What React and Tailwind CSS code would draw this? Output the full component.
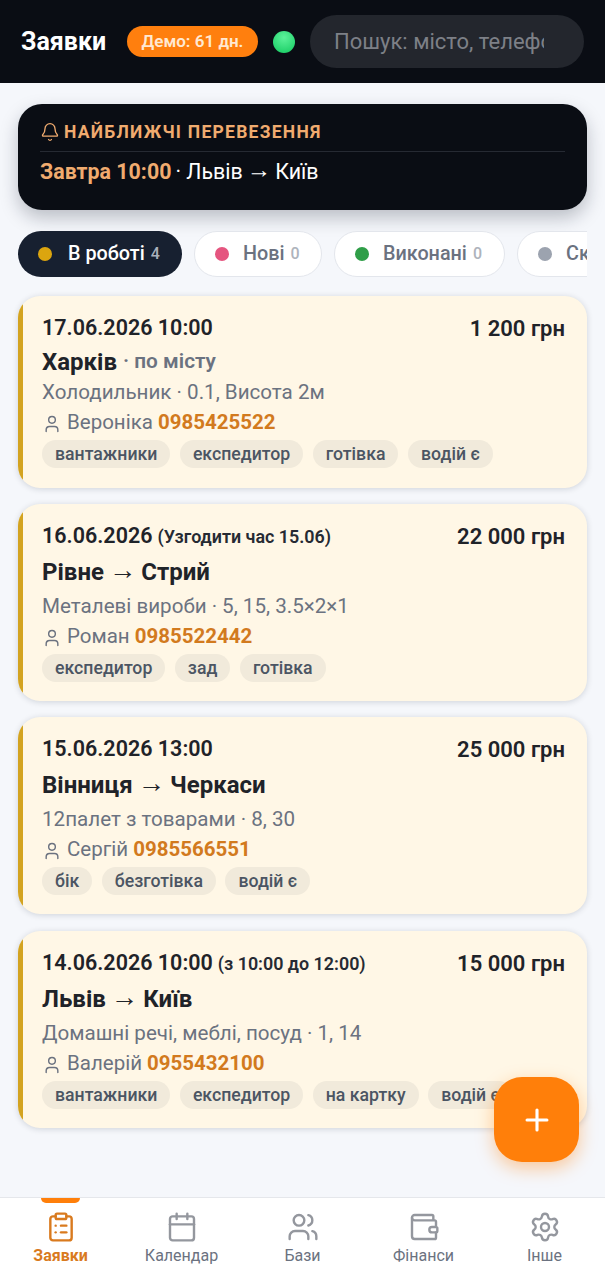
import React from "react";
import { Bell, User, ClipboardList, Calendar, Users, Wallet, Settings, Plus } from "lucide-react";

const filters = [
  { label: "В роботі", count: 4, dot: "bg-[#dca50f]", active: true, width: "w-[164px]" },
  { label: "Нові", count: 0, dot: "bg-[#e5557f]", width: "w-[128px]" },
  { label: "Виконані", count: 0, dot: "bg-[#2f9e48]", width: "w-[171px]" },
  { label: "Скасовані", count: 0, dot: "bg-[#9ca3af]", width: "w-[170px]" },
];

const orders = [
  {
    date: "17.06.2026 10:00",
    price: "1 200 грн",
    from: "Харків",
    sub: "по місту",
    cargo: "Холодильник · 0.1, Висота 2м",
    name: "Вероніка",
    phone: "0985425522",
    tags: ["вантажники", "експедитор", "готівка", "водій є"],
  },
  {
    date: "16.06.2026",
    note: "(Узгодити час 15.06)",
    price: "22 000 грн",
    from: "Рівне",
    to: "Стрий",
    cargo: "Металеві вироби · 5, 15, 3.5×2×1",
    name: "Роман",
    phone: "0985522442",
    tags: ["експедитор", "зад", "готівка"],
  },
  {
    date: "15.06.2026 13:00",
    price: "25 000 грн",
    from: "Вінниця",
    to: "Черкаси",
    cargo: "12палет з товарами · 8, 30",
    name: "Сергій",
    phone: "0985566551",
    tags: ["бік", "безготівка", "водій є"],
  },
  {
    date: "14.06.2026 10:00",
    note: "(з 10:00 до 12:00)",
    price: "15 000 грн",
    from: "Львів",
    to: "Київ",
    cargo: "Домашні речі, меблі, посуд · 1, 14",
    name: "Валерій",
    phone: "0955432100",
    tags: ["вантажники", "експедитор", "на картку", "водій є"],
  },
];

const navItems = [
  { label: "Заявки", icon: ClipboardList, active: true },
  { label: "Календар", icon: Calendar },
  { label: "Бази", icon: Users },
  { label: "Фінанси", icon: Wallet },
  { label: "Інше", icon: Settings },
];

// Roboto's own arrow is too small, the wide one comes from Liberation Sans
const Arrow = () => (
  <span className="inline-block -translate-y-[0.08em] font-['Liberation_Sans',sans-serif] text-[1.14em] leading-none">→</span>
);

const OrderCard = ({ order }) => (
  <div className={`${order.sub ? "h-[192px]" : "h-[197px]"} flex shrink-0 overflow-hidden rounded-[22px] bg-[#fff7e6] shadow-[0_1px_6px_rgba(15,23,42,0.16)] last:mt-[1px]`}>
    <div className="w-[5px] shrink-0 bg-[#d3a320]" />
    <div className="min-w-0 flex-1 pl-[19px] pr-[22px] pt-[19px]">
      <div className="flex h-[26px] items-center justify-between text-[21.5px] font-semibold text-[#1f2329]">
        <div className="whitespace-nowrap">
          {order.date}
          {order.note && <span className="ml-[5px] text-[17.9px] font-semibold text-[#262a33]">{order.note}</span>}
        </div>
        <div className="whitespace-nowrap text-[22px]">{order.price}</div>
      </div>
      <div className={`${order.sub ? "h-[28px] gap-[6px]" : "h-[32px] gap-[5px]"} mt-[7px] flex items-center whitespace-nowrap text-[24px] font-bold text-[#1f2329]`}>
        <span>{order.from}</span>
        {order.to && <Arrow />}
        {order.to && <span>{order.to}</span>}
        {order.sub && <span className="text-[20.8px] font-semibold text-[#6b7280]">· {order.sub}</span>}
      </div>
      <div className={`${order.sub ? "mt-[2px]" : "mt-[4px]"} flex h-[28px] items-center whitespace-nowrap text-[20.6px] text-[#6b7280]`}>{order.cargo}</div>
      <div className="mt-[2px] flex h-[28px] items-center whitespace-nowrap text-[20.5px] text-[#6b7280]">
        <User size={20} strokeWidth={1.7} className="mr-[5px] mt-[3px]" />
        {order.name}
        <span className="ml-[5px] font-bold text-[#d27a1e]">{order.phone}</span>
      </div>
      <div className="mt-[4px] flex gap-[9.5px] whitespace-nowrap">
        {order.tags.map((tag) => (
          <span key={tag} className="flex h-[28px] items-center rounded-full bg-[#f1eadb] px-[13px] text-[17.7px] font-medium text-[#4b5563]">
            {tag}
          </span>
        ))}
      </div>
    </div>
  </div>
);

const App = () => {
  return (
    <div className="relative flex h-[1280px] w-[605px] flex-col overflow-hidden bg-[#f5f7fb] font-['Roboto',sans-serif]">
      {/* Header */}
      <header className="flex h-[83px] shrink-0 items-center bg-[#0a0d14] px-[21px]">
        <h1 className="w-[87px] shrink-0 whitespace-nowrap text-[25px] font-bold text-white">Заявки</h1>
        <span className="ml-[19px] flex h-[31px] w-[131px] shrink-0 items-center justify-center rounded-full bg-[#ff7f0e] text-[17px] font-semibold text-[#ffe9d2]">
          Демо: 61 дн.
        </span>
        <span className="ml-[15px] h-[22px] w-[22px] shrink-0 rounded-full bg-[radial-gradient(circle_at_50%_30%,#5cf29a,#12c95f)]" />
        <div className="ml-[15px] flex h-[53px] w-[274px] shrink-0 items-center rounded-full bg-[#23262d] pl-[24px] pr-[40px]">
          <input
            readOnly
            placeholder="Пошук: місто, телефон"
            className="w-full min-w-0 bg-transparent text-[22px] text-white outline-none placeholder:text-[#7d8087]"
          />
        </div>
      </header>

      <main className="flex min-h-0 flex-1 flex-col px-[18px] pt-[21px]">
        {/* Nearest transports */}
        <section className="h-[106px] shrink-0 rounded-[24px] bg-[#0a0d14] px-[22px] pt-[17px] shadow-[0_8px_18px_rgba(15,23,42,0.25)]">
          <div className="flex h-[22px] items-center gap-[4px] text-[#f0ab6f]">
            <Bell size={20} strokeWidth={1.6} />
            <span className="whitespace-nowrap text-[17.5px] font-bold tracking-[1.25px]">НАЙБЛИЖЧІ ПЕРЕВЕЗЕННЯ</span>
          </div>
          <div className="mt-[8px] flex items-center gap-[4px] whitespace-nowrap border-t border-[#262a33] pt-[6px] text-[21.4px] leading-[28px] text-white">
            <span className="font-bold text-[#f0ab6f]">Завтра 10:00</span>
            <span>· Львів</span>
            <Arrow />
            <span>Київ</span>
          </div>
        </section>

        {/* Status filters */}
        <div className="mt-[21px] flex h-[46px] shrink-0 gap-[12px] overflow-hidden">
          {filters.map((f) => (
            <div
              key={f.label}
              className={`${f.width} flex h-[46px] shrink-0 items-center rounded-full pl-[20px] text-[19.8px] font-medium ${
                f.active ? "bg-[#172030] text-white" : "border border-[#e3e6ec] bg-white text-[#6b7280]"
              }`}
            >
              <span className={`${f.dot} h-[14px] w-[14px] shrink-0 rounded-full`} />
              <span className={`${f.active ? "ml-[16px]" : "ml-[14px]"} whitespace-nowrap`}>{f.label}</span>
              <span className={`ml-[6px] text-[16px] font-medium ${f.active ? "text-[#aab0bb]" : "text-[#aeb3bc]"}`}>{f.count}</span>
            </div>
          ))}
        </div>

        {/* Order list */}
        <div className="mt-[19px] flex flex-col gap-[16px]">
          {orders.map((order) => (
            <OrderCard key={order.date} order={order} />
          ))}
        </div>
      </main>

      {/* Add button */}
      <button className="absolute left-[494px] top-[1077px] flex h-[85px] w-[85px] items-center justify-center rounded-[28px] bg-[#ff7f0a] text-white shadow-[0_6px_18px_rgba(255,127,10,0.4)]">
        <Plus size={34} strokeWidth={2.2} />
      </button>

      {/* Bottom navigation */}
      <nav className="relative flex h-[83px] shrink-0 border-t border-[#e5e7eb] bg-white">
        {navItems.map((item) => {
          const Icon = item.icon;
          return (
            <div key={item.label} className={`relative flex flex-1 flex-col items-center pt-[13px] ${item.active ? "text-[#d97a1e]" : "text-[#6b7280]"}`}>
              {item.active && <span className="absolute top-0 h-[5px] w-[39px] rounded-b-[6px] bg-[#ff7f0a]" />}
              <Icon size={32} strokeWidth={1.8} className={item.active ? "text-[#d97a1e]" : "text-[#94979e]"} />
              <span className={`mt-[3px] text-[16px] leading-[20px] ${item.active ? "font-bold" : "font-normal"}`}>{item.label}</span>
            </div>
          );
        })}
      </nav>
    </div>
  );
};

export default App;
